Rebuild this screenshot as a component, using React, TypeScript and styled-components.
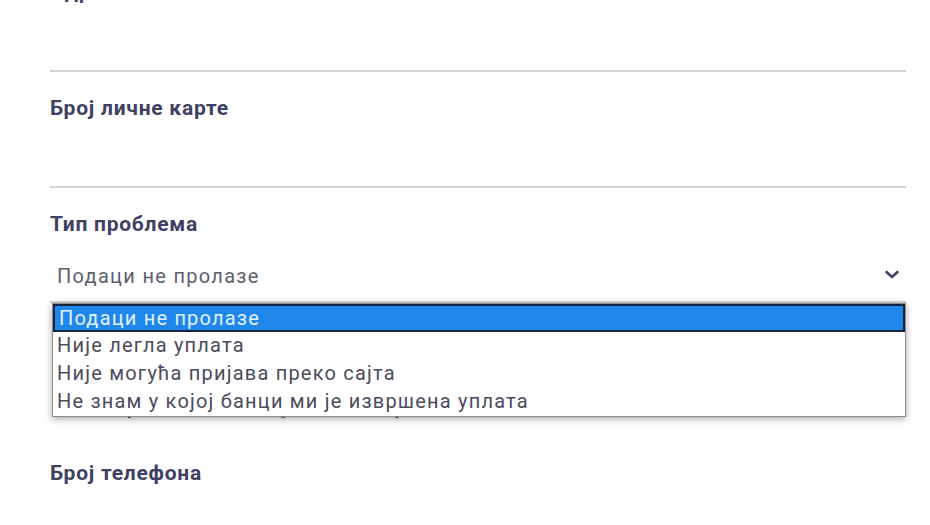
import styled, { createGlobalStyle } from "styled-components";

const GlobalStyle = createGlobalStyle`
  html, body {
    margin: 0;
    padding: 0;
    background: #ffffff;
    font-family: Roboto, "Liberation Sans", sans-serif;
  }
`;

const Page = styled.div`
  width: 930px;
  height: 525px;
  overflow: hidden;
  background: #ffffff;
`;

const Form = styled.form`
  display: flex;
  flex-direction: column;
  gap: 25px;
  margin-top: -19px;
  padding: 0 24px 0 50px;
`;

const Field = styled.div`
  display: flex;
  flex-direction: column;
  position: relative;
`;

const Label = styled.label`
  display: block;
  height: 22px;
  line-height: 22px;
  font-size: 21px;
  font-weight: 700;
  letter-spacing: 0.75px;
  color: #3e4163;
`;

const TextInput = styled.div`
  height: 67px;
  border-bottom: 2px solid #d4d4da;
`;

const SelectBox = styled.div`
  display: flex;
  align-items: center;
  justify-content: space-between;
  height: 50px;
  margin-top: 16px;
  padding: 0 6px 0 7px;
  border-bottom: 2px solid #d4d4da;
  font-size: 20px;
  letter-spacing: 1.3px;
  color: #5d606f;
`;

const Chevron = styled.svg`
  width: 16px;
  height: 9px;
  margin-bottom: 3px;
`;

const Options = styled.ul`
  position: absolute;
  top: 90px;
  left: 2px;
  right: 0;
  margin: 0;
  padding: 0;
  list-style: none;
  background: #ffffff;
  border: 1px solid #8c8c8c;
  box-shadow: 0 2px 7px rgba(0, 0, 0, 0.35);
  z-index: 2;
`;

const Option = styled.li<{ $selected?: boolean }>`
  height: ${(p) => (p.$selected ? "24px" : "28px")};
  line-height: ${(p) => (p.$selected ? "24px" : "27px")};
  padding: 0 4px;
  font-size: 20px;
  letter-spacing: 1.2px;
  white-space: nowrap;
  color: ${(p) => (p.$selected ? "#e3f1ff" : "#4b4c5c")};
  background: ${(p) => (p.$selected ? "#1f87ec" : "transparent")};
  border: ${(p) => (p.$selected ? "2px solid #17223d" : "none")};
`;

/* sits under the open list; only its descenders peek out */
const Hint = styled.p`
  margin: 93px 0 19px 10px;
  height: 22px;
  line-height: 22px;
  font-size: 20px;
  font-weight: 700;
  letter-spacing: 0.6px;
  color: #3e4163;
  white-space: nowrap;
`;

const problems = [
  "Подаци не пролазе",
  "Није легла уплата",
  "Није могућа пријава преко сајта",
  "Не знам у којој банци ми је извршена уплата",
];

export default function App() {
  return (
    <Page>
      <GlobalStyle />
      <Form>
        <Field>
          <Label>Адреса</Label>
          <TextInput />
        </Field>
        <Field>
          <Label>Број личне карте</Label>
          <TextInput />
        </Field>
        <Field>
          <Label>Тип проблема</Label>
          <SelectBox>
            <span>{problems[0]}</span>
            <Chevron viewBox="0 0 16 9">
              <polyline
                points="2.5,2 8,7 13.5,2"
                fill="none"
                stroke="#3e4163"
                strokeWidth="2.6"
                strokeLinecap="round"
                strokeLinejoin="round"
              />
            </Chevron>
          </SelectBox>
          <Options>
            {problems.map((p, i) => (
              <Option key={p} $selected={i === 0}>
                {p}
              </Option>
            ))}
          </Options>
          <Hint>Опис проблема ако није наведен у листи изнад</Hint>
        </Field>
        <Field>
          <Label>Број телефона</Label>
          <TextInput />
        </Field>
      </Form>
    </Page>
  );
}
